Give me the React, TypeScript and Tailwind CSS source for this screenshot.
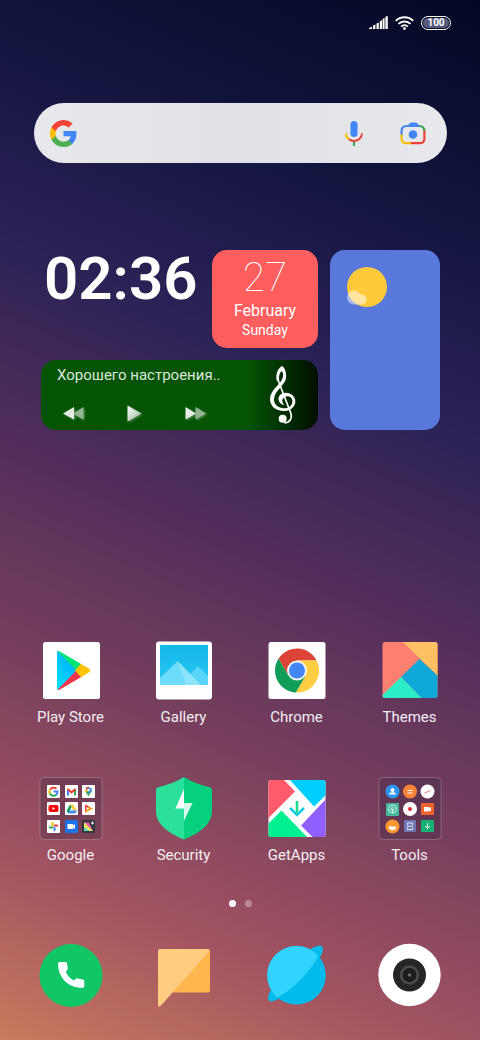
import React from 'react';

function GoogleLogo({ className }: { className?: string }) {
  return (
    <svg viewBox="1 1 22 22" className={className} aria-hidden="true">
      <path fill="#4285f4" d="M22.56 12.25c0-.78-.07-1.53-.2-2.25H12v4.26h5.92a5.06 5.06 0 0 1-2.2 3.32v2.77h3.57c2.08-1.92 3.27-4.74 3.27-8.1z" />
      <path fill="#4cae50" d="M12 23c2.97 0 5.46-.98 7.28-2.66l-3.57-2.77c-.98.66-2.23 1.06-3.71 1.06-2.86 0-5.29-1.93-6.16-4.53H2.18v2.84A11 11 0 0 0 12 23z" />
      <path fill="#fbbc05" d="M5.84 14.09a6.6 6.6 0 0 1 0-4.18V7.07H2.18a11 11 0 0 0 0 9.86l3.66-2.84z" />
      <path fill="#f44336" d="M12 5.38c1.62 0 3.06.56 4.21 1.64l3.15-3.15A11 11 0 0 0 2.18 7.07l3.66 2.84C6.71 7.31 9.14 5.38 12 5.38z" />
    </svg>
  );
}

function StatusBar() {
  return (
    <header className="flex h-[45px] items-center justify-end gap-[7px] pr-[29px]">
      <svg viewBox="0 0 19 13" className="h-[13px] w-[19px]" fill="#fff" role="img" aria-label="Signal">
        <path d="M0 13v-1l3-1.200V13zM4 13v-3.500l2.400-1V13zM7.500 13V7.600l2.300-1V13zM10.800 13V5.200l2.200-1V13zM13.600 13V3l2-.9V13zM16.400 13V.8L18.800 0v13z" />
      </svg>
      <svg viewBox="0 0 19 14" className="h-[14px] w-[19px]" fill="none" stroke="#fff" strokeWidth="2" role="img" aria-label="Wi-Fi">
        <path d="M.8 4.900a12.300 12.300 0 0 1 17.400 0M3.500 7.900a8.500 8.500 0 0 1 12 0M6.200 10.600a4.700 4.700 0 0 1 6.600 0" />
        <circle cx="9.500" cy="12.500" r="1.400" fill="#fff" stroke="none" />
      </svg>
      <div className="flex h-[14px] w-[30px] rounded-full border border-white p-px">
        <span className="flex flex-1 items-center justify-center rounded-full bg-[#55597c] text-[10px] leading-none font-bold text-white">
          100
        </span>
      </div>
    </header>
  );
}

function SearchBar() {
  return (
    <form className="mt-[58px] mr-[33px] ml-[34px] flex h-[60px] items-center rounded-full bg-linear-to-r from-[#e8e9ed] via-[#dfe1e5] to-[#e8e9ed] pr-[21px] pl-4">
      <GoogleLogo className="size-[27px] shrink-0" />
      <input type="search" aria-label="Search" className="h-full min-w-0 flex-1 bg-transparent px-3 text-base text-gray-800 outline-none" />
      <button type="button" aria-label="Voice search">
        <svg viewBox="0 0 18 25" className="h-[25px] w-[18px]" fill="none" strokeWidth="2">
          <rect x="5.500" y="0" width="7" height="16" rx="3.500" fill="#4285f4" />
          <path stroke="#34a853" d="M9 19.500V25" />
          <path stroke="#ea4335" d="M3.700 18a8 8 0 0 0 10.600 0c1.900-1.600 2.700-3.500 2.700-5.500" />
          <path stroke="#fbbc05" d="M1 12.500c0 2.200 1 4.200 2.700 5.500" />
        </svg>
      </button>
      <button type="button" aria-label="Search by image" className="ml-[37px]">
        <svg viewBox="0 0 26 23" className="h-[23px] w-[26px]" fill="none" strokeWidth="2.200">
          <path stroke="#4285f4" d="M1.600 13V8.500a4.500 4.500 0 0 1 4.500-4.500H20" />
          <path fill="#4285f4" d="M8 4c1.500-2.600 2-3.500 3.600-3.500h3.800C17 .5 17.500 1.400 19 4z" />
          <path stroke="#34a853" d="M19.500 4a4.800 4.800 0 0 1 4.900 5" />
          <path stroke="#ea4335" d="M24.400 8.500V17a4.200 4.200 0 0 1-4.200 4.200H11" />
          <path stroke="#fbbc05" d="M1.600 12.500V17a4.200 4.200 0 0 0 4.200 4.200H11" />
          <circle cx="13" cy="12.500" r="4.300" fill="#4285f4" />
        </svg>
      </button>
    </form>
  );
}

function MusicWidget() {
  return (
    <section className="flex h-[70px] items-center justify-between rounded-[15px] bg-linear-to-r from-[#045404] from-75% to-[#010f01] pr-[22px] pl-4">
      <div className="flex h-full flex-col justify-between pt-[5px] pb-2">
        <p className="text-[15px] leading-5 text-[#dbe6db]">Хорошего настроения..</p>
        <div className="ml-1.5 flex w-[143px] items-center justify-between drop-shadow-[1px_1px_1px_rgba(255,255,255,0.35)]">
          <button type="button" aria-label="Previous">
            <svg viewBox="0 0 21 13" className="h-[13px] w-[21px]">
              <path fill="#93b593" d="M20.500 0v12.500L10 6.500z" />
              <path fill="#e4ebe4" d="M11 0v12.500L0 6.500z" />
            </svg>
          </button>
          <button type="button" aria-label="Play">
            <svg viewBox="0 0 15 17" className="h-[17px] w-[15px]">
              <defs>
                <linearGradient id="play" x1="0" y1="0" x2="1" y2="1">
                  <stop offset="0" stopColor="#fff" />
                  <stop offset="1" stopColor="#93b593" />
                </linearGradient>
              </defs>
              <path fill="url(#play)" d="M.5.500v16L14.500 8.500z" />
            </svg>
          </button>
          <button type="button" aria-label="Next">
            <svg viewBox="0 0 21 13" className="h-[13px] w-[21px]">
              <path fill="#93b593" d="M10.500 0v12.500L21 6.500z" />
              <path fill="#e4ebe4" d="M.5 0v12.500L11 6.500z" />
            </svg>
          </button>
        </div>
      </div>
      <svg viewBox="0 0 78 174" className="h-[58px] w-[26px]" fill="#fff" aria-hidden="true">
        <path d="M36 0C45 6 50 20 48 36C45 58 14 72 12 100C11 116 26 127 42 127C58 127 68 117 67 105C66 93 56 89 47 92C35 96 33 108 44 118C27 114 20 98 30 87C44 73 74 82 76 104C77 122 60 135 42 135C16 135 0 120 0 99C0 72 30 58 38 36C41 26 39 19 35 16C28 20 26 32 28 44L20 44C16 24 24 6 36 0z" />
        <path d="M24 42L62 140C68 158 58 171 43 171" fill="none" stroke="#fff" strokeWidth="5" />
        <circle cx="38" cy="158" r="12" />
      </svg>
    </section>
  );
}

function Widgets() {
  return (
    <div className="mt-[87px] mr-10 ml-[41px] flex gap-3">
      <div className="flex flex-1 flex-col gap-3">
        <div className="flex justify-between">
          <time className="pl-[3px] text-[60px] leading-[58px] font-semibold text-white">02:36</time>
          <section className="flex h-[98px] w-[106px] flex-col items-center rounded-[15px] bg-[#ff5e5f] pt-1.5 text-white">
            <span className="text-[40px] leading-[44px] font-thin">27</span>
            <span className="text-base leading-[22px]">February</span>
            <span className="text-sm leading-4">Sunday</span>
          </section>
        </div>
        <MusicWidget />
      </div>
      <section aria-label="Weather" className="w-[110px] rounded-[15px] bg-[#5878dc] p-4">
        <svg viewBox="0 0 42 42" className="size-[42px]">
          <circle cx="21" cy="21" r="20" fill="#ffca3a" />
          <path fill="#fff" fillOpacity=".5" d="M8 38.500a7 7 0 1 1 6.300-10.200a4.900 4.900 0 1 1 2.200 10.200z" />
        </svg>
      </section>
    </div>
  );
}

function Tile({ children }: { children: React.ReactNode }) {
  return (
    <svg viewBox="0 0 63 63" className="size-[63px] overflow-visible" aria-hidden="true">
      {children}
    </svg>
  );
}

function PlayStoreIcon() {
  return (
    <Tile>
      <defs>
        <linearGradient id="ps" x1="1" y1="0" x2="0" y2="1">
          <stop offset="0" stopColor="#00a0ff" />
          <stop offset="1" stopColor="#00e3ff" />
        </linearGradient>
      </defs>
      <rect x="4" y="3" width="57" height="57" rx="2.500" fill="#fff" />
      <path fill="url(#ps)" d="M18 13q0-1 1-1L39 31.500L19 51q-1 0-1-1z" />
      <path fill="#00e676" d="M18.500 12.200q.8-.6 2 0L43 25.500L37.500 31.500z" />
      <path fill="#f5334a" d="M18.500 50.800q.8.600 2 0L43 37.500L37.500 31.500z" />
      <path fill="#ffc400" d="M42 24.800L50.500 30q1.600 1.500 0 3L42 38.200L35.800 31.500z" />
    </Tile>
  );
}

function GalleryIcon() {
  return (
    <Tile>
      <defs>
        <linearGradient id="sky" x1="0" y1="0" x2="0" y2="1">
          <stop offset="0" stopColor="#12b8e8" />
          <stop offset="1" stopColor="#2cc6f3" />
        </linearGradient>
      </defs>
      <rect x="4" y="2.500" width="56" height="58" rx="3" fill="#fff" />
      <path fill="url(#sky)" d="M8 6h48v40H8z" />
      <path fill="#5ad4f8" d="M37 36L46 27l10 10v9H37z" />
      <path fill="#6ddbfa" d="M8 39L25.500 22L42 39L49 46H8z" />
      <path fill="#8ee4fd" d="M25.500 22L49 46H34z" />
    </Tile>
  );
}

function ChromeIcon() {
  return (
    <Tile>
      <rect x="3.500" y="3" width="57" height="57" rx="2.500" fill="#fff" />
      <g transform="translate(32 31.500)">
        <path fill="#db4437" d="M-18.450-11.980A22 22 0 0 1 19.600-10L0-10L-8.660 5z" />
        <path fill="#ffcd40" d="M19.600-10A22 22 0 0 1-1.150 21.970L8.660 5L0-10z" />
        <path fill="#0f9d58" d="M-1.150 21.970A22 22 0 0 1-18.450-11.980L-8.660 5L8.660 5z" />
        <circle r="10" fill="#f5f5f5" />
        <circle r="8" fill="#4285f4" />
      </g>
    </Tile>
  );
}

function ThemesIcon() {
  return (
    <Tile>
      <clipPath id="themes">
        <rect x="4.500" y="3" width="55" height="56" rx="2.500" />
      </clipPath>
      <g clipPath="url(#themes)">
        <path fill="#ff7f70" d="M4 3h56v56H4z" />
        <path fill="#ffc062" d="M25 3H60V37.500z" />
        <path fill="#0fa8d9" d="M41.500 20L60 37v23H44.500L23 38z" />
        <path fill="#2bedc6" d="M23 38L44.500 60H4V56.500z" />
      </g>
    </Tile>
  );
}

function FolderFrame() {
  return <rect x="1" y="0.500" width="62" height="62" rx="4" fill="#30203a" fillOpacity=".28" stroke="#fff" strokeOpacity=".22" />;
}

function GoogleFolderIcon() {
  return (
    <Tile>
      <FolderFrame />
      <g fill="#fff">
        <rect x="8" y="8" width="13" height="13" rx="1" />
        <rect x="26" y="8" width="13" height="13" rx="1" />
        <rect x="43" y="8" width="13" height="13" rx="1" />
        <rect x="8" y="25" width="13" height="13" rx="1" />
        <rect x="26" y="25" width="13" height="13" rx="1" />
        <rect x="43" y="25" width="13" height="13" rx="1" />
        <rect x="8" y="43" width="13" height="13" rx="1" />
      </g>
      <g fill="none" strokeWidth="2">
        <path stroke="#ea4335" d="M17.500 11.800a4.200 4.200 0 0 0-6.500 1" />
        <path stroke="#fbbc05" d="M11 12.500a4.500 4.500 0 0 0 0 4.300" />
        <path stroke="#34a853" d="M10.800 16.500a4.200 4.200 0 0 0 6.400 1.300" />
        <path stroke="#4285f4" d="M17 18a4.200 4.200 0 0 0 1.500-3.400h-4" />
      </g>
      <path fill="#4285f4" d="M28 12h2v6.500h-2z" />
      <path fill="#34a853" d="M35 12h2v6.500h-2z" />
      <path d="M28.500 12l4 3.300l4-3.300" fill="none" stroke="#ea4335" strokeWidth="2.200" />
      <path fill="#34a853" d="M46.200 14.500c1 1.500 2.300 2.500 3.300 5c1-3 3.500-4 3.500-6.500z" />
      <path fill="#4285f4" d="M46.600 11.500A3.600 3.600 0 0 1 53 13L49.500 16.500z" />
      <path fill="#ea4335" d="M46.500 11.300a3.600 3.600 0 0 1 3-1.800v3.500z" />
      <path fill="#fbbc05" d="M46 13a3.500 3.500 0 0 0 1 2.700l3-3.200z" />
      <circle cx="49.600" cy="13" r="1.200" fill="#fff" />
      <rect x="9.500" y="28" width="10" height="7" rx="2" fill="#f00" />
      <path fill="#fff" d="M13.500 30v3l2.500-1.500z" />
      <path fill="#0f9d58" d="M31 27.500L27.500 34l1.700 2.500L33 29.500z" />
      <path fill="#ffcd40" d="M31 27.500h3.200L38 34h-3.300z" />
      <path fill="#4285f4" d="M30.700 33.500H38L36.300 36.500h-7.200z" />
      <path fill="#ff9c20" d="M46 27.500L54 31.500L46 36z" />
      <path fill="#e8453c" d="M46 27.500l4 2-4 5z" />
      <path fill="#fff" d="M47.500 30v3l2.500-1.500z" />
      <path fill="#fbbc05" d="M14.500 44.500v5q-2.300-.2-2.300-2.500t2.300-2.500z" />
      <path fill="#ea4335" d="M19.500 49.500h-5q.2-2.300 2.500-2.300t2.500 2.300z" />
      <path fill="#4285f4" d="M14.500 54.500v-5q2.300.2 2.300 2.500t-2.300 2.500z" />
      <path fill="#34a853" d="M9.500 49.500h5q-.2 2.300-2.500 2.300t-2.500-2.300z" />
      <rect x="26" y="43" width="13" height="13" rx="1" fill="#1a73e8" />
      <path fill="#fff" d="M28.500 47h5.500v1.500l2-1.500v5l-2-1.500V52h-5.500z" />
      <rect x="43" y="43" width="13" height="13" rx="1" fill="#33383b" />
      <path fill="#e554b4" d="M45 45.500h5L54 54z" />
      <path fill="#ffe45c" d="M45 45l9 9H45z" />
      <path fill="#5fd6c8" d="M45 50l6 4H45z" />
      <path d="M52 46h3M53.500 44.500v3" stroke="#fff" />
    </Tile>
  );
}

function SecurityIcon() {
  return (
    <Tile>
      <path fill="#2ae09b" d="M32 0C24 5 15 8 5.500 10.500Q4 11 4 12.500V34C4 47 16 56 32 62.500z" />
      <path fill="#05d07f" d="M32 0C40 5 49 8 58.500 10.500Q60 11 60 12.500V34C60 47 48 56 32 62.500z" />
      <path fill="#fff" d="M32 12v19.500H23.500z" />
      <path fill="#d6f8ea" d="M32 26h8.500L32 44z" />
    </Tile>
  );
}

function GetAppsIcon() {
  return (
    <Tile>
      <clipPath id="getapps">
        <rect x="3.500" y="3" width="57" height="57" rx="2.500" />
      </clipPath>
      <g clipPath="url(#getapps)">
        <path fill="#fff" d="M3 3h58v58H3z" />
        <path fill="#ff5b6b" d="M3 3H19L30 14.500L3 41.500z" />
        <path fill="#00ceff" d="M25 3H61V18L49 29.500z" />
        <path fill="#925fff" d="M61 22L36 48.500L47.500 60H61z" />
        <path fill="#00ef91" d="M3 47L16.500 33.500L42 60H3z" />
        <path d="M25 31l7 7l7-7" fill="none" stroke="#14cdeb" strokeWidth="2.600" />
        <path d="M32 24v13" stroke="#18db93" strokeWidth="2.600" />
      </g>
    </Tile>
  );
}

function ToolsFolderIcon() {
  return (
    <Tile>
      <FolderFrame />
      <circle cx="14.500" cy="14.500" r="7" fill="#2f93f0" />
      <path fill="#fff" d="M14.500 11a2 2 0 0 1 1 3.700v1h2.200v1.700h-6.400v-1.700h2.200v-1a2 2 0 0 1 1-3.700z" />
      <circle cx="32" cy="14.500" r="7" fill="#fa8537" />
      <path d="M29.500 13.500h5M29.500 16h5" stroke="#fff" strokeWidth="1.200" />
      <circle cx="49.500" cy="14.500" r="7" fill="#fff" />
      <path d="M46.500 16l3-1.200l3-1.300" stroke="#e9788c" fill="none" />
      <rect x="8" y="26" width="13" height="13" rx="1" fill="#46ba9b" />
      <g fill="none" stroke="#c9efe3">
        <circle cx="14.500" cy="32" r="4" />
        <circle cx="14.500" cy="32" r="1.500" />
        <path d="M14.500 32v4.500" />
      </g>
      <circle cx="32" cy="32" r="7" fill="#fff" />
      <circle cx="32" cy="32" r="2" fill="#e22a33" />
      <rect x="43" y="26" width="13" height="12" rx="1" fill="#ee622e" />
      <path fill="#fff" d="M46 30h5v1l2-1v4.500l-2-1v1h-5z" />
      <circle cx="14.500" cy="49.500" r="7" fill="#ff9530" />
      <path fill="#fff" d="M10.700 49.500h7.600a3.800 3.800 0 0 1-7.600 0z" />
      <rect x="26" y="43" width="12" height="12" rx="1" fill="#7078b1" />
      <path d="M29.500 48v-2h5v2M29.500 50.500v2h5v-2M29 49.200h6" fill="none" stroke="#e4e6f6" />
      <rect x="43" y="43" width="13" height="12" rx="1" fill="#17b274" />
      <path d="M49.500 46v5M47 49l2.500 2.500L52 49" fill="none" stroke="#dcf5ea" />
    </Tile>
  );
}

function PhoneIcon() {
  return (
    <Tile>
      <circle cx="32" cy="31.500" r="31.500" fill="#10c667" />
      <path fill="#fff" d="M20.500 18h6q1.200 0 1.500 1.300l.8 5q.2 1.400-.8 2.200l-1.400 1.200q3 6 8.200 8.800l1.400-1.300q1-1 2.300-.8l5.500 1q1.300.3 1.300 1.600v5.500q0 1.300-1.500 1.300C30 44.500 19 34 19 19.500q0-1.500 1.500-1.500z" />
    </Tile>
  );
}

function MessagesIcon() {
  return (
    <Tile>
      <path fill="#ffb64d" d="M58 6v40.500q0 2-2 2H18z" />
      <path fill="#ffcc80" d="M8 5h48q2 0 1.500 2L9 61.500Q6 64 6 61V7q0-2 2-2z" />
    </Tile>
  );
}

function BrowserIcon() {
  return (
    <Tile>
      <clipPath id="planet">
        <circle cx="31.500" cy="31.300" r="29.300" />
      </clipPath>
      <ellipse cx="30.500" cy="29.500" rx="38" ry="9.500" transform="rotate(-45.500 30.500 29.500)" fill="#02baeb" />
      <circle cx="31.500" cy="31.300" r="29.300" fill="#02baeb" />
      <path clipPath="url(#planet)" fill="#30d4ff" d="M0 0H57C56 17 30 46 8 56L0 60z" />
    </Tile>
  );
}

function CameraIcon() {
  return (
    <Tile>
      <circle cx="31.500" cy="31" r="31.200" fill="#fff" />
      <circle cx="31.500" cy="31" r="16.500" fill="#242628" />
      <circle cx="31.500" cy="31" r="8.300" fill="#18191b" stroke="#494b4f" strokeWidth="2.800" />
      <circle cx="31.500" cy="31" r="4.500" fill="none" stroke="#26282a" />
      <circle cx="31.500" cy="31" r="1.800" fill="#66686b" />
    </Tile>
  );
}

const apps = [
  { name: 'Play Store', icon: <PlayStoreIcon /> },
  { name: 'Gallery', icon: <GalleryIcon /> },
  { name: 'Chrome', icon: <ChromeIcon /> },
  { name: 'Themes', icon: <ThemesIcon /> },
  { name: 'Google', icon: <GoogleFolderIcon /> },
  { name: 'Security', icon: <SecurityIcon /> },
  { name: 'GetApps', icon: <GetAppsIcon /> },
  { name: 'Tools', icon: <ToolsFolderIcon /> },
];

const dock = [
  { name: 'Phone', icon: <PhoneIcon /> },
  { name: 'Messages', icon: <MessagesIcon /> },
  { name: 'Browser', icon: <BrowserIcon /> },
  { name: 'Camera', icon: <CameraIcon /> },
];

export default function App() {
  return (
    <div className="flex min-h-screen flex-col bg-[linear-gradient(203deg,#030924_0%,#12143e_18%,#2a2256_35%,#512d5b_51%,#79405d_69%,#a25361_85%,#c87b5d_100%)] font-['Roboto','Noto_Sans',sans-serif]">
      <StatusBar />
      <SearchBar />
      <Widgets />

      <main className="mt-auto grid grid-cols-4 gap-y-[50px] px-[14px] pt-8">
        {apps.map((app) => (
          <button key={app.name} type="button" className="flex flex-col items-center gap-[5px]">
            {app.icon}
            <span className="text-[15px] leading-5 text-[#f4eef2]">{app.name}</span>
          </button>
        ))}
      </main>

      <div className="mt-[35px] flex justify-center gap-[9px]">
        <span className="size-[7px] rounded-full bg-white" />
        <span className="size-[7px] rounded-full bg-white/35" />
      </div>

      <nav aria-label="Dock" className="mt-[37px] grid grid-cols-4 px-[14px] pb-[33px]">
        {dock.map((app) => (
          <button key={app.name} type="button" aria-label={app.name} className="flex justify-center">
            {app.icon}
          </button>
        ))}
      </nav>
    </div>
  );
}
